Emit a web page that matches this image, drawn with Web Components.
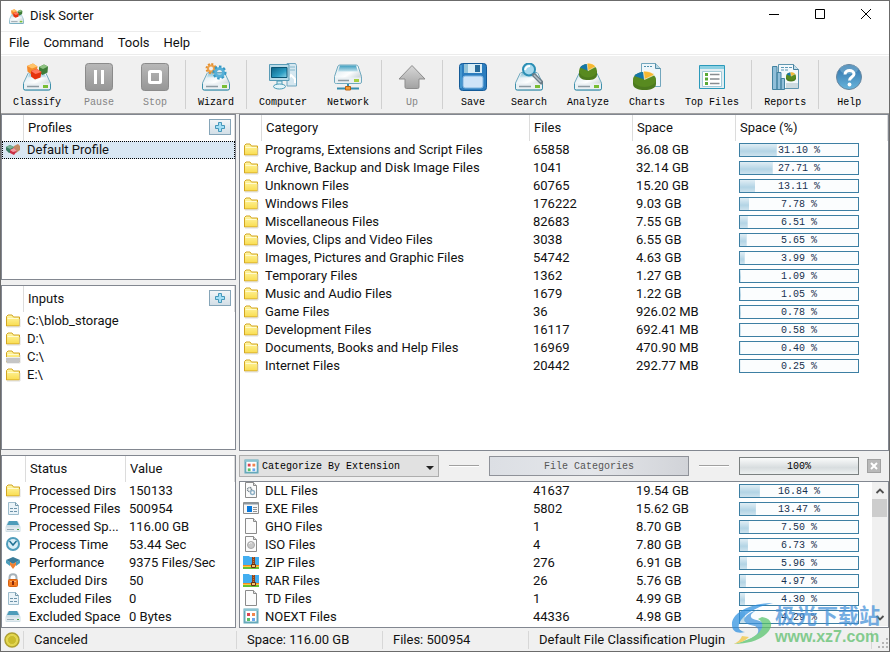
<!DOCTYPE html>
<html lang="en">
<head>
<meta charset="utf-8">
<title>Disk Sorter</title>
<style>
	body {
		margin: 0;
		font: 13px/18px Roboto, "Noto Sans", sans-serif;
		color: #111;
		--mono: 10px/14px "Liberation Mono", monospace;
		--face: #f0f0f0;
		--line: #828790;
		--split: #dcdcdc;
	}
</style>
</head>
<body>
<disk-sorter></disk-sorter>

<script>
const DEFS = `
	<defs>
		<linearGradient id="lid" x1="0" y1="0" x2="1" y2="1"><stop offset="0" stop-color="#d5e4ec"/><stop offset=".5" stop-color="#fdfefe"/><stop offset="1" stop-color="#a9b9c4"/></linearGradient>
		<linearGradient id="band" x1="0" y1="0" x2="0" y2="1"><stop offset="0" stop-color="#3d9dbf"/><stop offset="1" stop-color="#c4e2ec"/></linearGradient>
		<linearGradient id="teal" x1="0" y1="0" x2="1" y2="1"><stop offset="0" stop-color="#0c6184"/><stop offset=".6" stop-color="#2b9cc2"/><stop offset="1" stop-color="#8ed5e8"/></linearGradient>
		<linearGradient id="gray" x1="0" y1="0" x2="0" y2="1"><stop offset="0" stop-color="#b8b8b8"/><stop offset="1" stop-color="#969696"/></linearGradient>
		<linearGradient id="arrow" x1="0" y1="0" x2="0" y2="1"><stop offset="0" stop-color="#d8d8d8"/><stop offset="1" stop-color="#a2a2a2"/></linearGradient>
		<linearGradient id="blue" x1="0" y1="0" x2="0" y2="1"><stop offset="0" stop-color="#2f6fa8"/><stop offset="1" stop-color="#68b5dc"/></linearGradient>
		<linearGradient id="gold" x1="0" y1="0" x2="0" y2="1"><stop offset="0" stop-color="#fff7a8"/><stop offset="1" stop-color="#f9dc4e"/></linearGradient>
	</defs>`;

const DRIVE = `
	<path d="M7 9.500h14q1.500 0 2 1L27.500 20v5.500q0 1.500-2 1.500h-23q-2 0-2-1.500V20L5 10.500q.5-1 2-1z" fill="url(#lid)" stroke="#6fa9be"/>
	<path d="M7 10h14l2.500 4.500h-19z" fill="url(#band)" opacity=".6"/>
	<path d="M1 20.500h26v5q0 1-1.500 1h-23Q1 26.500 1 25.500z" fill="#eaf0f3"/>
	<path d="M.5 21v4.500Q.5 27 2.500 27h23q2 0 2-1.500V21" fill="none" stroke="#3d90ab"/>
	<path d="M4 23.500h12" stroke="#8d9ba3" stroke-width="1.500"/><path d="M20 22h5v3h-5z" fill="#78bd35"/>`;

const PIE = `
	<path d="M0 9v4c0 4 4.500 6 10 6s10-2 10-6V9z" fill="#4c7a1e"/>
	<ellipse cx="10" cy="8.500" rx="10" ry="7.500" fill="#588a20"/>
	<path d="M10 8.500 1 5Q4 1 9 1z" fill="#1476a8"/><path d="M10 8.500 9 0q7 0 9.500 4z" fill="#f6b832" stroke="#fff" stroke-width=".6"/>`;

const SHEET = `
	<path d="M2.500.5h8l3 3v12h-11z" fill="#fbfbfb" stroke="#8b8b8b"/><path d="M10.500.5v3h3" fill="#ddd" stroke="#8b8b8b"/>`;

const FOLDER = `
	<path d="M1.500 14V4.500L3 3h4l1.500 2h6v9z" fill="url(#gold)" stroke="#d2a520"/><path d="M2.500 6.500h11" stroke="#fffbd0"/><path d="M2 15h13V7" fill="none" stroke="#ddd"/>`;

const ARCHIVE = `
	<path d="M0 2h6l1 1h9v12H0z" fill="#43aef0"/><path d="M0 11h16v1H0z" fill="#f58b1d"/><path d="M0 12h16v1H0z" fill="#ffc93d"/><path d="M0 13h16v2H0z" fill="#65bf35"/>
	<path d="M9 3h3v10H9z" fill="#8e431c"/><path d="M10.500 3v7" stroke="#c9763c" stroke-dasharray="1 1"/><path d="M8.500 10.500h4v3h-4z" fill="#f7c26d" stroke="#633016"/>`;

const GRID_VIEW = `
	<path d="M1.500 1.500h13v13h-13z" fill="#fff" stroke="#65a9bb" stroke-width="2"/><path d="M1 2h14" stroke="#8bc5d3" stroke-width="2"/>
	<path d="M4 5h3v3H4z" fill="#dc4352"/><path d="M9 5h3v3H9z" fill="#f2854d"/><path d="M4 10h3v3H4z" fill="#58bf63"/><path d="M9 10h3v3H9z" fill="#69a6ef"/>`;

const CUBES = `
	<path d="m16 4 5-2.500 4 2-.5 6-5 2.500-3.500-3z" fill="#3f7d38"/><path d="m16 4 5-2.500 4 2-5 2.500z" fill="#8ec281"/>
	<path d="m4 3 6-2.500 4.500 3-1 6-5 2-4-3z" fill="#f58a2b"/><path d="m4 3 6-2.500 4.500 3-5.500 2z" fill="#ffc368"/>
	<path d="m8 8 6-2 4.500 3-1 5.500-5.500 2-4-3z" fill="#e5330f"/><path d="m8 8 6-2 4.500 3-6 2z" fill="#ff7960"/>`;

const ICONS = {
	classify: [28, DRIVE + CUBES],
	pause: [28, `<rect x=".5" y=".5" width="27" height="27" rx="3" fill="url(#gray)" stroke="#8b8b8b"/><path d="M9 7h3v14H9zM16 7h3v14h-3z" fill="#fff"/>`],
	stop: [28, `<rect x=".5" y=".5" width="27" height="27" rx="3" fill="url(#gray)" stroke="#8b8b8b"/><rect x="8.500" y="8.500" width="11" height="11" rx="1" fill="none" stroke="#fff" stroke-width="3"/>`],
	wizard: [28, DRIVE + `<g fill="none"><circle cx="9" cy="5.500" r="3" stroke="#eda24a" stroke-width="2"/><circle cx="9" cy="5.500" r="4.500" stroke="#e5902f" stroke-width="2" stroke-dasharray="2 1.500"/><circle cx="17.500" cy="9.500" r="4" stroke="#58b0d8" stroke-width="3"/><circle cx="17.500" cy="9.500" r="6" stroke="#3498c4" stroke-width="2" stroke-dasharray="2.500 2"/></g>`],
	computer: [28, `<path d="M18 .5h8.500l1 2v20.500H18z" fill="#d5e7f0" stroke="#70a6bf"/><path d="M21 4h5M21 7h5" stroke="#87b8cb"/><path d="m20 15 2-3 4 4v4" fill="none" stroke="#fff" stroke-width="2"/><path d="M.5 1.500h19.500v16H.5z" fill="#b9dbe8" stroke="#5a9cb7"/><path d="M2.500 4.500H18v10H2.500z" fill="url(#teal)" stroke="#0b5574"/><path d="M8 18h5v5H8z" fill="#d8eef5" stroke="#4a9ab5"/><ellipse cx="10.500" cy="23.500" rx="6" ry="2.500" fill="#e4f5fa" stroke="#4a9ab5"/>`],
	network: [28, `<path d="M14 21v4M3 25.500h22" stroke="#378eae" stroke-width="2"/><path d="M11.500 23.500h5v3.500h-5z" fill="#f49b36" stroke="#b96213"/><path d="M6 2h16q1.500 0 2 1l3.500 10.500V19q0 1.500-2 1.500h-23q-2 0-2-1.500v-5.500L4 3q.5-1 2-1z" fill="url(#lid)" stroke="#6fa9be"/><path d="M6 2.500h16l2 6H4z" fill="url(#band)"/><path d="M1 14.500h26V19q0 1-1.500 1h-23Q1 20 1 19z" fill="#eaf0f3"/><path d="M4 17.500h11" stroke="#8d9ba3" stroke-width="1.500"/><path d="M20 16h5v3h-5z" fill="#a5cf42"/>`],
	up: [28, `<path d="M14 2.500 27 16h-6v8q0 1.500-1.500 1.500h-11Q7 25.500 7 24v-8H1z" fill="url(#arrow)" stroke="#8d8d8d"/>`],
	save: [28, `<rect x=".5" y=".5" width="27" height="27" rx="3" fill="#2c7dbe" stroke="#145b98"/><path d="M2 2v23" stroke="#4da0d5" stroke-width="1.500"/><path d="M5 1h18v9H5z" fill="#d9edf5"/><path d="M16 2h5v7h-5z" fill="#266a99"/><path d="M5 1h4v9H5z" fill="#94c4d9"/><rect x="4" y="13" width="20" height="12" rx="2" fill="#cee4f8" stroke="#7db5e0"/>`],
	search: [28, DRIVE + `<circle cx="14" cy="6.500" r="6" fill="#a7d9ed" stroke="#2b8eb4" stroke-width="2"/><path d="M10 7q1-4 5-4" fill="none" stroke="#fff" stroke-width="2"/><path d="m19 12 7.500 7.500" stroke="#6b7d88" stroke-width="4" stroke-linecap="round"/><path d="m19 12 7 7" stroke="#b5c2c9" stroke-width="1.500"/>`],
	analyze: [28, DRIVE + `<g transform="translate(5 0) scale(.9)">${PIE}</g>`],
	charts: [28, `<path d="M8.500.5h14l5 5v18h-19z" fill="#eef6fa" stroke="#72a6bd"/><path d="M22.500.5v5h5" fill="#b8d7e4" stroke="#568da6"/><path d="M11 3.500h9" stroke="#4f91ad" stroke-dasharray="2 1"/><g transform="translate(0 8) scale(1.150 1)">${PIE}</g>`],
	top: [28, `<path d="M1.500 2.500h25v23h-25z" fill="#e2edf2" stroke="#2b9abb"/><path d="M2 3h24v3H2z" fill="#8dd0e2"/><path d="M4.500 8.500h19v15h-19z" fill="#fff" stroke="#a4cbd8"/><path d="M7 10h3v3H7zM7 14.500h3v3H7zM7 19h3v3H7z" fill="#59a936"/><path d="M12 11.500h9.500M12 16h9.500M12 20.500h9.500" stroke="#878c90" stroke-width="1.500"/>`],
	reports: [28, `<path d="M7.500 1.500h15l5 5v19h-20z" fill="#f3f8fb" stroke="#5f96af"/><path d="M22.500 1.500v5h5" fill="#c7dfeb" stroke="#467f9c"/><path d="M10 4.500h11M10 7h8" stroke="#5c99b6" stroke-dasharray="3 1"/><g transform="translate(15 9) scale(.5)">${PIE}</g><path d="M15 20h12v5H15z" fill="#ccdadf"/><path d="M1.500 3.500H6v23H1.500zM6 9.500h4v17H6zM10 15.500h3.500v11H10z" fill="#91bfd9" stroke="#4383a1"/>`],
	help: [28, `<circle cx="14" cy="14" r="12.500" fill="url(#blue)" stroke="#67869f"/><ellipse cx="14" cy="6.500" rx="9" ry="4.500" fill="#93c5de" opacity=".45"/><path d="M10 11.500C10 6 19 6.500 19 11c0 3-4.500 3-4.500 6.500" fill="none" stroke="#fff" stroke-width="3"/><circle cx="14.500" cy="21.500" r="1.900" fill="#fff"/>`],
	folder: [16, FOLDER],
	volume: [16, FOLDER + `<path d="M1 9h14v4l-1 2H2l-1-2z" fill="#c5c5c5"/><path d="M1 9.500h14" stroke="#eee"/>`],
	profile: [16, `<path d="m1 6 4-2 4 2-1 5-4 1-3-3z" fill="#397d62"/><path d="m1 6 4-2 4 2-4 2z" fill="#79b499"/><path d="m9 5 4-2 2 2v4l-4 3-3-3z" fill="#c28963"/><path d="m5 9 4-2 3 3-3 4-4-2z" fill="#c82f45"/><path d="m5 9 4-2 3 3-4 1z" fill="#f39aa0"/>`],
	document: [16, `<path d="M3.500 2.500h7l3 3v9h-10z" fill="#eaf3f8" stroke="#9dbccc"/><path d="M10.500 2.500v3h3" fill="none" stroke="#7698aa"/><path d="M5 8.500h3M9 8.500h3M5 11.500h3M9 11.500h3" stroke="#6d93a9"/>`],
	drive: [16, `<path d="M4 3h8q1 0 1.500 1l2 5v4q0 1-1 1h-13q-1 0-1-1V9l2-5Q3 3 4 3z" fill="#cfdfe7"/><path d="M4 3h8l2 4H2z" fill="#4d9cba"/><path d="M1 9.500h14V13H1z" fill="#e3ebef"/><path d="M2 11.500h7" stroke="#9aadb9"/><path d="M12 11h2v1h-2z" fill="#45a646"/>`],
	clock: [16, `<circle cx="8" cy="8" r="6" fill="#d9eef7" stroke="#4f9dbc" stroke-width="2"/><path d="m4.500 5 3.500 4 3.500-4" fill="none" stroke="#1f7195" stroke-width="1.500"/>`],
	speed: [16, `<path d="m1 6 7-3 7 3-7 4z" fill="#397b99"/><path d="m1 6 4 2v4L1 9zM15 6l-4 2v4l4-3z" fill="#4b9dbb"/><path d="m5 8 3 2 3-2v3l-3 4-3-4z" fill="#ef8132"/>`],
	lock: [16, `<path d="M4.500 8V5.500C4.500 1 11.500 1 11.500 5.500V8" fill="none" stroke="#a5b1b9" stroke-width="2"/><rect x="3.500" y="7.500" width="9" height="7" rx="1" fill="#f57d22" stroke="#d56212"/><path d="M5 9.500h6" stroke="#ffb36e"/><path d="M7 9h2v4H7z" fill="#8d2c0c"/>`],
	dll: [16, SHEET + `<circle cx="6.500" cy="7.500" r="2" fill="none" stroke="#77858d" stroke-width="1.500" stroke-dasharray="1 .5"/><circle cx="9.500" cy="10.500" r="2" fill="none" stroke="#8fb0c5" stroke-width="1.500"/>`],
	exe: [16, `<path d="M.5 2.500h15v11H.5z" fill="#f7f7f7" stroke="#8d8d8d"/><path d="M1 3.500h14" stroke="#8d969d" stroke-width="2"/><path d="M4 6h5v6H4z" fill="#0879dc"/><path d="M10 7.500h4M10 9.500h4M10 11.500h4" stroke="#929292"/>`],
	blank: [16, SHEET],
	iso: [16, SHEET + `<circle cx="8" cy="9" r="3.500" fill="#c8c8c8" stroke="#aaa"/><path d="M6 8q1-2 3-1" fill="none" stroke="#f0f0f0"/>`],
	archive: [16, ARCHIVE],
	grid: [16, GRID_VIEW],
	ready: [16, `<circle cx="8" cy="8" r="7" fill="#e6d94a" stroke="#aea033" stroke-width="1.500"/><circle cx="8" cy="8" r="4.500" fill="#cabc2c" stroke="#e2d65e"/>`],
	plus: [10, `<path d="M3.500.5h3v3h3v3h-3v3h-3v-3h-3v-3h3z" fill="#a4dff6" stroke="#4597b9"/>`],
	minimize: [10, `<path d="M0 5.500h10" stroke="#000"/>`],
	maximize: [10, `<path d="M.5.5h9v9h-9z" fill="none" stroke="#000"/>`],
	close: [10, `<path d="m0 0 10 10M10 0 0 10" stroke="#000"/>`],
	dismiss: [10, `<path d="m2 2 6 6M8 2 2 8" stroke="#fff" stroke-width="2"/>`],
	chevronUp: [10, `<path d="m1.500 7 3.500-3.500L8.500 7" fill="none" stroke="#505050" stroke-width="1.800"/>`],
	chevronDown: [10, `<path d="m1.500 3 3.500 3.500L8.500 3" fill="none" stroke="#505050" stroke-width="1.800"/>`]
};

class AppIcon extends HTMLElement {
	connectedCallback() {
		const [box, shapes] = ICONS[this.getAttribute("name")];
		const size = this.getAttribute("size") || box;
		this.attachShadow({ mode: "open" }).innerHTML = `
			<style>
				:host { display: inline-block; flex: none; vertical-align: top; }
				svg { display: block; }
			</style>
			<svg width="${size}" height="${size}" viewBox="0 0 ${box} ${box}" aria-hidden="true">${DEFS}${shapes}</svg>
		`;
	}
}

class TitleBar extends HTMLElement {
	connectedCallback() {
		this.attachShadow({ mode: "open" }).innerHTML = `
			<style>
				:host { display: flex; align-items: center; height: 30px; padding-left: 8px; background: #fff; }
				span { flex: 1; padding-left: 6px; }
				button { width: 46px; height: 30px; padding: 0; border: 0; background: none; }
				button:hover { background: #e5e5e5; }
			</style>
			<app-icon name="classify" size="15"></app-icon>
			<span><slot></slot></span>
			<button aria-label="Minimize"><app-icon name="minimize"></app-icon></button>
			<button aria-label="Maximize"><app-icon name="maximize"></app-icon></button>
			<button aria-label="Close"><app-icon name="close"></app-icon></button>
		`;
	}
}

class MenuBar extends HTMLElement {
	connectedCallback() {
		const items = this.getAttribute("items").split(",");
		this.attachShadow({ mode: "open" }).innerHTML = `
			<style>
				:host { display: block; background: #fff; border-bottom: 1px solid #ececec; }
				:host::before { content: ""; display: block; width: 200px; height: 1px; background: #ececec; }
				nav { display: flex; height: 22px; padding-left: 1px; }
				button { border: 0; padding: 0 7px; background: none; font: inherit; color: inherit; }
				button:hover { background: #e5f3ff; }
			</style>
			<nav>${items.map(item => `<button>${item}</button>`).join("")}</nav>
		`;
	}
}

class ToolButton extends HTMLElement {
	connectedCallback() {
		this.attachShadow({ mode: "open" }).innerHTML = `
			<style>
				:host { display: block; flex: none; }
				button {
					display: flex;
					flex-direction: column;
					align-items: center;
					gap: 5px;
					min-width: 56px;
					padding: 0 10px;
					border: 0;
					background: none;
					font: var(--mono);
					color: #000;
					white-space: nowrap;
				}
				button:disabled { color: #858585; }
			</style>
			<button ${this.hasAttribute("disabled") ? "disabled" : ""}>
				<app-icon name="${this.getAttribute("icon")}"></app-icon>
				<span><slot></slot></span>
			</button>
		`;
	}
}

class ToolBar extends HTMLElement {
	connectedCallback() {
		this.attachShadow({ mode: "open" }).innerHTML = `
			<style>
				:host {
					display: flex;
					height: 50px;
					padding: 7px 2px 0;
					background: var(--face);
					border-top: 1px solid #fff;
					border-bottom: 1px solid #a0a0a0;
				}
				::slotted(hr) {
					flex: none;
					width: 1px;
					height: 49px;
					margin: -3px 2px 0;
					border: 0;
					background: #d0d0d0;
				}
			</style>
			<slot></slot>
		`;
	}
}

class UsageBar extends HTMLElement {
	connectedCallback() {
		const value = this.getAttribute("value");
		this.attachShadow({ mode: "open" }).innerHTML = `
			<style>
				:host {
					display: block;
					box-sizing: border-box;
					width: 120px;
					height: 14px;
					border: 1px solid #3d7fa3;
					background:
						linear-gradient(rgba(255,255,255,.6), transparent 60%, rgba(255,255,255,.35)) 0 0 / ${value}% 100% no-repeat,
						linear-gradient(#b3d4e5, #b3d4e5) 0 0 / ${value}% 100% no-repeat,
						#fbfdfe;
					font: var(--mono);
					line-height: 13px;
					color: #17304d;
					text-align: center;
				}
			</style>
			${value} %
		`;
	}
}

// Columns: [heading, width]; a column without a width takes the free space.
class DataTable extends HTMLElement {
	set data(data) {
		this._data = data;
		this.render();
	}

	cell(value) {
		if (typeof value === "number") {
			return `<td><usage-bar value="${value.toFixed(2)}"></usage-bar></td>`;
		}
		return `<td>${value}</td>`;
	}

	render() {
		const { columns, rows, selected, head = true } = this._data;
		const root = this.shadowRoot || this.attachShadow({ mode: "open" });
		root.innerHTML = `
			<style>
				:host { display: block; flex: 1; min-width: 0; }
				table { width: 100%; table-layout: fixed; border-collapse: separate; border-spacing: 0; }
				th { height: 26px; padding: 0 0 0 4px; text-align: left; font-weight: normal; border-right: 1px solid var(--split); }
				td { height: 18px; padding: 0 0 0 3px; white-space: nowrap; overflow: hidden; }
				th, td { box-sizing: border-box; }
				tr.selected td { background: #d9e7f3; }
				tr.selected { outline: 1px dotted #000; outline-offset: -1px; }
			</style>
			<table>
				<colgroup>${columns.map(([, width]) => `<col${width ? ` style="width: ${width}px"` : ""}>`).join("")}</colgroup>
				${head ? `<thead><tr>${columns.map(([name]) => `<th>${name}</th>`).join("")}</tr></thead>` : ""}
				<tbody>${rows.map(([icon, ...cells], i) => `
					<tr class="${i === selected ? "selected" : ""}">
						<td><app-icon name="${icon}"></app-icon></td>
						${cells.map(this.cell).join("")}
					</tr>`).join("")}
				</tbody>
			</table>
		`;
	}
}

class ListPanel extends HTMLElement {
	connectedCallback() {
		this.attachShadow({ mode: "open" }).innerHTML = `
			<style>
				:host { display: flex; box-sizing: border-box; border: 1px solid var(--line); background: #fff; min-height: 0; }
			</style>
			<slot></slot>
		`;
	}
}

class AddButton extends HTMLElement {
	connectedCallback() {
		this.attachShadow({ mode: "open" }).innerHTML = `
			<style>
				:host { display: block; }
				button {
					display: flex;
					align-items: center;
					justify-content: center;
					width: 22px;
					height: 16px;
					padding: 0;
					border: 1px solid #86a5b8;
					background: linear-gradient(#f2f5f7, #d3dfe7);
				}
			</style>
			<button aria-label="${this.getAttribute("label")}"><app-icon name="plus"></app-icon></button>
		`;
	}
}

class ScrollRail extends HTMLElement {
	connectedCallback() {
		this.attachShadow({ mode: "open" }).innerHTML = `
			<style>
				:host { display: flex; flex-direction: column; width: 16px; background: var(--face); }
				button { display: flex; align-items: center; justify-content: center; height: 17px; padding: 0; border: 0; background: none; }
				.thumb { height: 18px; margin-right: 1px; background: #cdcdcd; }
				.track { flex: 1; }
			</style>
			<button aria-label="Scroll up"><app-icon name="chevronUp"></app-icon></button>
			<div class="thumb"></div>
			<div class="track"></div>
			<button aria-label="Scroll down"><app-icon name="chevronDown"></app-icon></button>
		`;
	}
}

class SortBar extends HTMLElement {
	connectedCallback() {
		this.attachShadow({ mode: "open" }).innerHTML = `
			<style>
				:host { display: flex; align-items: center; gap: 10px; height: 30px; padding-right: 8px; font: var(--mono); }
				label { flex: 1; display: grid; align-items: center; }
				label > * { grid-area: 1 / 1; }
				label app-icon { margin-left: 5px; width: 16px; }
				select {
					appearance: none;
					width: 100%;
					height: 22px;
					padding: 2px 22px 0;
					border: 1px solid #adadad;
					border-radius: 0;
					background: #e1e1e1;
					font: inherit;
					color: #000;
				}
				label i {
					justify-self: end;
					margin: 3px 5px 0 0;
					border: 4px solid transparent;
					border-top-color: #222;
					border-bottom: 0;
					pointer-events: none;
				}
				hr { width: 30px; margin: 0; border: 0; border-top: 1px solid #a0a0a0; border-bottom: 1px solid #fff; }
				button { box-sizing: border-box; padding: 2px 0 0; font: inherit; color: #555; }
				.categories { width: 200px; height: 20px; border: 1px solid #8f9299; background: linear-gradient(90deg, #dcdfe4, #e4e6ea 50%, #d1d3d8); }
				.total { width: 120px; height: 18px; border: 1px solid #7b8080; background: linear-gradient(#fafbfb, #d8dddf 60%, #edf0f0); color: #000; }
				.dismiss { display: flex; align-items: center; justify-content: center; width: 14px; height: 14px; margin-left: -2px; padding: 0; border: 1px solid #a1a1a1; background: #b9b9b9; }
			</style>
			<label>
				<select aria-label="Categorize by"><option>Categorize By Extension</option></select>
				<app-icon name="grid" size="15"></app-icon>
				<i></i>
			</label>
			<hr>
			<button class="categories">File Categories</button>
			<hr>
			<button class="total">100%</button>
			<button class="dismiss" aria-label="Close"><app-icon name="dismiss"></app-icon></button>
		`;
	}
}

class StatusBar extends HTMLElement {
	connectedCallback() {
		this.attachShadow({ mode: "open" }).innerHTML = `
			<style>
				:host {
					display: grid;
					grid-template-columns: 22px 213px 146px 146px 1fr 18px;
					align-items: center;
					height: 23px;
					background: var(--face);
				}
				app-icon { margin-left: 3px; }
				::slotted(span) { padding-left: 10px; border-left: 1px solid #d7d7d7; white-space: nowrap; }
				.grip { border-left: 1px solid #d7d7d7; height: 18px; }
				.grip svg { display: block; margin: 7px 0 0 6px; }
			</style>
			<app-icon name="ready"></app-icon>
			<slot></slot>
			<div class="grip">
				<svg width="11" height="11" fill="#b5b5b5"><path d="M8 0h2v2H8zM8 4h2v2H8zM8 8h2v2H8zM4 4h2v2H4zM4 8h2v2H4zM0 8h2v2H0z"/></svg>
			</div>
		`;
	}
}

class SiteMark extends HTMLElement {
	connectedCallback() {
		this.attachShadow({ mode: "open" }).innerHTML = `
			<style>
				:host { display: flex; align-items: center; gap: 2px; opacity: .72; pointer-events: none; white-space: nowrap; }
				b { display: block; font: 700 21px/26px "Noto Sans CJK SC", sans-serif; color: #418fd8; }
				span { display: block; font: 700 16px/20px "Liberation Sans", sans-serif; color: #5abd69; }
			</style>
			<svg width="42" height="42" viewBox="0 0 42 42">
				<path d="M42 0C20 0 0 10 1 22c0 7 6 9 13 7-6-1-8-5-5-10C13 11 25 4 42 0z" fill="#2b8fe0"/>
				<path d="M29 6C18 9 11 15 14 19c2 4 11 2 13 7 2 6-7 10-14 12 12-1 22-8 20-16-1-6-12-4-13-8-1-3 3-6 9-8z" fill="#3c92dc"/>
				<path d="M31 14c8 1 11 6 8 12C35 34 22 41 3 41c12-3 25-8 28-16 1-4 0-7-4-9z" fill="#55c36a"/>
				<path d="M3 41c4-2 7-5 8-8l7 1c-4 4-9 6-15 7z" fill="#f2c63c"/>
			</svg>
			<div><b>极光下载站</b><span>www.xz7.com</span></div>
		`;
	}
}

class DiskSorter extends HTMLElement {
	connectedCallback() {
		this.attachShadow({ mode: "open" }).innerHTML = `
			<style>
				:host {
					position: relative;
					display: flex;
					flex-direction: column;
					box-sizing: border-box;
					min-height: 100vh;
					border: 1px solid #6b6b6b;
					background: var(--face);
				}
				main { flex: 1; display: grid; grid-template-columns: 235px minmax(0, 1fr); gap: 3px; }
				.side, .content { display: flex; flex-direction: column; }
				.side { gap: 5px; }
				.side list-panel { position: relative; }
				.profiles { flex: 1 1 166px; }
				.inputs { flex: 1 1 165px; }
				.status { padding-bottom: 1px; }
				.categories { flex: 1; }
				.extensions { padding-bottom: 1px; }
				add-button { position: absolute; top: 4px; right: 4px; }
				site-mark { position: absolute; right: 9px; bottom: 4px; }
			</style>
			<title-bar>Disk Sorter</title-bar>
			<menu-bar items="File,Command,Tools,Help"></menu-bar>
			<tool-bar>
				<tool-button icon="classify">Classify</tool-button>
				<tool-button icon="pause" disabled>Pause</tool-button>
				<tool-button icon="stop" disabled>Stop</tool-button>
				<hr>
				<tool-button icon="wizard">Wizard</tool-button>
				<hr>
				<tool-button icon="computer">Computer</tool-button>
				<tool-button icon="network">Network</tool-button>
				<hr>
				<tool-button icon="up" disabled>Up</tool-button>
				<hr>
				<tool-button icon="save">Save</tool-button>
				<tool-button icon="search">Search</tool-button>
				<tool-button icon="analyze">Analyze</tool-button>
				<tool-button icon="charts">Charts</tool-button>
				<tool-button icon="top">Top Files</tool-button>
				<hr>
				<tool-button icon="reports">Reports</tool-button>
				<hr>
				<tool-button icon="help">Help</tool-button>
			</tool-bar>
			<main>
				<div class="side">
					<list-panel class="profiles"><data-table id="profiles"></data-table><add-button label="Add profile"></add-button></list-panel>
					<list-panel class="inputs"><data-table id="inputs"></data-table><add-button label="Add input"></add-button></list-panel>
					<list-panel class="status"><data-table id="status"></data-table></list-panel>
				</div>
				<div class="content">
					<list-panel class="categories"><data-table id="categories"></data-table></list-panel>
					<sort-bar></sort-bar>
					<list-panel class="extensions"><data-table id="extensions"></data-table><scroll-rail></scroll-rail></list-panel>
				</div>
			</main>
			<status-bar>
				<span>Canceled</span>
				<span>Space: 116.00 GB</span>
				<span>Files: 500954</span>
				<span>Default File Classification Plugin</span>
			</status-bar>
			<site-mark></site-mark>
		`;

		const find = id => this.shadowRoot.querySelector("#" + id);

		find("profiles").data = {
			columns: [["", 22], ["Profiles"]],
			rows: [["profile", "Default Profile"]],
			selected: 0
		};
		find("inputs").data = {
			columns: [["", 22], ["Inputs"]],
			rows: [
				["folder", "C:\\blob_storage"],
				["folder", "D:\\"],
				["volume", "C:\\"],
				["folder", "E:\\"]
			]
		};
		find("status").data = {
			columns: [["", 24], ["Status", 100], ["Value"]],
			rows: [
				["folder", "Processed Dirs", "150133"],
				["document", "Processed Files", "500954"],
				["drive", "Processed Sp...", "116.00 GB"],
				["clock", "Process Time", "53.44 Sec"],
				["speed", "Performance", "9375 Files/Sec"],
				["lock", "Excluded Dirs", "50"],
				["document", "Excluded Files", "0"],
				["drive", "Excluded Space", "0 Bytes"]
			]
		};
		find("categories").data = {
			columns: [["", 22], ["Category"], ["Files", 103], ["Space", 103], ["Space (%)", 152]],
			rows: [
				["Programs, Extensions and Script Files", "65858", "36.08 GB", 31.10],
				["Archive, Backup and Disk Image Files", "1041", "32.14 GB", 27.71],
				["Unknown Files", "60765", "15.20 GB", 13.11],
				["Windows Files", "176222", "9.03 GB", 7.78],
				["Miscellaneous Files", "82683", "7.55 GB", 6.51],
				["Movies, Clips and Video Files", "3038", "6.55 GB", 5.65],
				["Images, Pictures and Graphic Files", "54742", "4.63 GB", 3.99],
				["Temporary Files", "1362", "1.27 GB", 1.09],
				["Music and Audio Files", "1679", "1.22 GB", 1.05],
				["Game Files", "36", "926.02 MB", 0.78],
				["Development Files", "16117", "692.41 MB", 0.58],
				["Documents, Books and Help Files", "16969", "470.90 MB", 0.40],
				["Internet Files", "20442", "292.77 MB", 0.25]
			].map(row => ["folder", ...row])
		};
		find("extensions").data = {
			head: false,
			columns: [["", 22], ["Category"], ["Files", 103], ["Space", 103], ["Space (%)", 136]],
			rows: [
				["dll", "DLL Files", "41637", "19.54 GB", 16.84],
				["exe", "EXE Files", "5802", "15.62 GB", 13.47],
				["blank", "GHO Files", "1", "8.70 GB", 7.50],
				["iso", "ISO Files", "4", "7.80 GB", 6.73],
				["archive", "ZIP Files", "276", "6.91 GB", 5.96],
				["archive", "RAR Files", "26", "5.76 GB", 4.97],
				["blank", "TD Files", "1", "4.99 GB", 4.30],
				["grid", "NOEXT Files", "44336", "4.98 GB", 4.29]
			]
		};
	}
}

customElements.define("app-icon", AppIcon);
customElements.define("title-bar", TitleBar);
customElements.define("menu-bar", MenuBar);
customElements.define("tool-button", ToolButton);
customElements.define("tool-bar", ToolBar);
customElements.define("usage-bar", UsageBar);
customElements.define("data-table", DataTable);
customElements.define("list-panel", ListPanel);
customElements.define("add-button", AddButton);
customElements.define("scroll-rail", ScrollRail);
customElements.define("sort-bar", SortBar);
customElements.define("status-bar", StatusBar);
customElements.define("site-mark", SiteMark);
customElements.define("disk-sorter", DiskSorter);
</script>
</body>
</html>
